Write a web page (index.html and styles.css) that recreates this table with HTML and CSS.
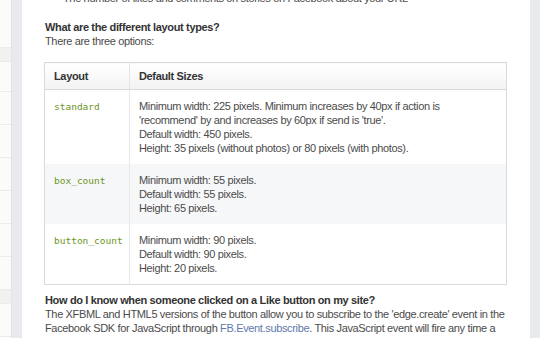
FILE: index.html
```html
<!DOCTYPE html>
<html lang="en">
  <head>
    <meta charset="UTF-8" />
    <title>Like Button FAQ</title>
    <link rel="stylesheet" href="styles.css">
  </head>

  <body>
    <div class="page">
      <div class="side-nav">
        <div class="nav-item nav-top"></div>
        <div class="nav-item nav-band"></div>
        <div class="nav-item nav-tall"></div>
        <div class="nav-item"></div>
        <div class="nav-item"></div>
        <div class="nav-item"></div>
        <div class="nav-item"></div>
        <div class="nav-item"></div>
        <div class="nav-item"></div>
        <div class="nav-item nav-band"></div>
        <div class="nav-item"></div>
      </div>
      <div class="gutter"></div>

      <div class="content">
        <ul class="bullets">
          <li>The number of likes and comments on stories on Facebook about your URL</li>
        </ul>

        <h4 class="question">What are the different layout types?</h4>
        <p class="answer">There are three options:</p>

        <table class="sizes">
          <thead>
            <tr>
              <th class="col-layout">Layout</th>
              <th>Default Sizes</th>
            </tr>
          </thead>
          <tbody>
            <tr>
              <td><code>standard</code></td>
              <td>
                Minimum width: 225 pixels. Minimum increases by 40px if action is<br />
                'recommend' by and increases by 60px if send is 'true'.<br />
                Default width: 450 pixels.<br />
                Height: 35 pixels (without photos) or 80 pixels (with photos).
              </td>
            </tr>
            <tr class="odd">
              <td><code>box_count</code></td>
              <td>
                Minimum width: 55 pixels.<br />
                Default width: 55 pixels.<br />
                Height: 65 pixels.
              </td>
            </tr>
            <tr>
              <td><code>button_count</code></td>
              <td>
                Minimum width: 90 pixels.<br />
                Default width: 90 pixels.<br />
                Height: 20 pixels.
              </td>
            </tr>
          </tbody>
        </table>

        <h4 class="question q-after-table">How do I know when someone clicked on a Like button on my site?</h4>
        <p class="answer">
          The XFBML and HTML5 versions of the button allow you to subscribe to the 'edge.create' event in the<br />
          Facebook SDK for JavaScript through <a href="#">FB.Event.subscribe</a>. This JavaScript event will fire any time a<br />
          button is clicked.
        </p>
      </div>

      <div class="gutter"></div>
    </div>
  </body>
</html>
```

FILE: styles.css
```css
body {
  margin: 0;
  font-family: "Liberation Sans", Arial, sans-serif;
  font-size: 11px;
  line-height: 14px;
  letter-spacing: -0.35px;
  color: #4b4b4b;
  background: #e9eaed;
  overflow: hidden;
}

.page {
  display: flex;
  width: 540px;
  height: 338px;
  overflow: hidden;
}

/* left navigation, only its edge is visible */
.side-nav {
  width: 12px;
  background: #fbfbfb;
  border-right: 1px solid #e3e3e3;
  box-sizing: border-box;
  flex-shrink: 0;
}

.nav-item {
  height: 33px;
  border-bottom: 1px solid #ececec;
  box-sizing: border-box;
}

.nav-top {
  height: 48px;
}

.nav-band {
  height: 14px;
  background: #f1f1f1;
}

.nav-tall {
  height: 30px;
}

.gutter {
  width: 10px;
  flex-shrink: 0;
  background: #e9eaed;
}

.content {
  flex: 1;
  background: white;
  padding: 0 23px;
  white-space: nowrap;
}

.bullets {
  margin: -9px 0 0 0;
  padding-left: 18px;
  list-style: none;
}

.question {
  margin: 15px 0 0 0;
  font-size: 11px;
  font-weight: bold;
  color: #333;
}

.answer {
  margin: 0;
}

.answer a {
  color: #5f78ab;
  text-decoration: none;
}

.sizes {
  margin: 14px 0 0 -1px;
  width: 463px;
  border-collapse: collapse;
  table-layout: fixed;
  border: 1px solid #dadada;
}

.sizes th {
  text-align: left;
  font-weight: bold;
  color: #333;
  padding: 6px 9px;
  background: linear-gradient(to bottom, #ffffff, #f3f3f3);
  border-bottom: 1px solid #dadada;
}

.sizes .col-layout {
  width: 66px;
  border-right: 1px solid #e4e4e4;
}

.sizes td {
  vertical-align: top;
  padding: 9px 9px;
}

.sizes td:first-child {
  border-right: 1px solid #e8e8e8;
}

.sizes tr.odd td {
  background: #f6f7f8;
}

code {
  font-family: "DejaVu Sans Mono", monospace;
  font-size: 9.5px;
  letter-spacing: 0;
  color: #6c961f;
}

.q-after-table {
  margin-top: 8px;
}
```
